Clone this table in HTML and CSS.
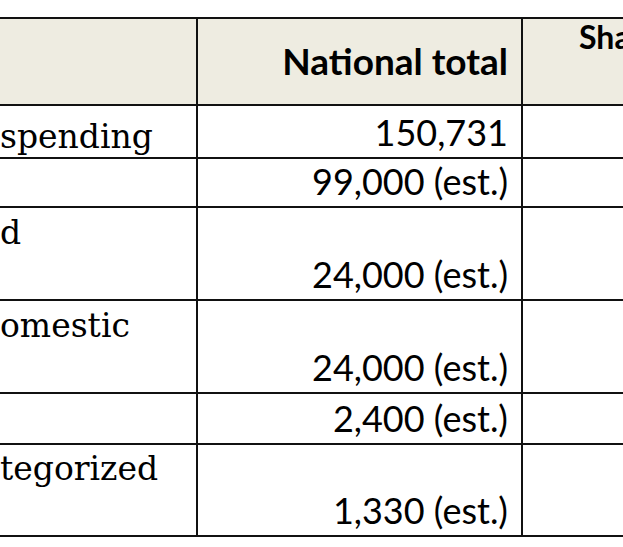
FILE: index.html
```html
<!DOCTYPE html>
<html>
<head>
<meta charset="utf-8">
<link rel="stylesheet" href="styles.css">
</head>
<body>
<div class="wrap">
<table class="data">
  <colgroup>
    <col class="c-label">
    <col class="c-total">
    <col class="c-share">
  </colgroup>
  <thead>
    <tr class="r-head">
      <th class="label"></th>
      <th class="total-h">National total</th>
      <th class="share-h">Share</th>
    </tr>
  </thead>
  <tbody>
    <tr class="r1">
      <td class="label"><div class="ltxt">spending</div></td>
      <td class="num">150,731</td>
      <td></td>
    </tr>
    <tr class="r2">
      <td class="label"></td>
      <td class="num">99,000 (est.)</td>
      <td></td>
    </tr>
    <tr class="r3">
      <td class="label"><div class="ltxt">d<br>&nbsp;</div></td>
      <td class="num">24,000 (est.)</td>
      <td></td>
    </tr>
    <tr class="r4">
      <td class="label"><div class="ltxt">omestic<br>&nbsp;</div></td>
      <td class="num">24,000 (est.)</td>
      <td></td>
    </tr>
    <tr class="r5">
      <td class="label"></td>
      <td class="num">2,400 (est.)</td>
      <td></td>
    </tr>
    <tr class="r6">
      <td class="label"><div class="ltxt">tegorized<br>&nbsp;</div></td>
      <td class="num">1,330 (est.)</td>
      <td></td>
    </tr>
  </tbody>
</table>
</div>
</body>
</html>
```

FILE: styles.css
```css
html, body {
  margin: 0;
  padding: 0;
  background: #ffffff;
}
body {
  width: 623px;
  height: 547px;
  overflow: hidden;
}
.wrap {
  padding-top: 17px;
}
.data {
  border-collapse: collapse;
  table-layout: fixed;
  width: 800px;
  color: #000;
}
.c-label { width: 197px; }
.c-total { width: 325px; }
.c-share { width: 278px; }

.data th, .data td {
  border: 2px solid #111;
  padding: 0;
  box-sizing: border-box;
}
.data .label {
  border-left: none;
}
.r-head th {
  background: #eeece1;
  height: 87px;
  font-family: Lato, "Open Sans", sans-serif;
  font-weight: 700;
}
.total-h {
  font-size: 37px;
  line-height: 1.2;
  text-align: right;
  vertical-align: middle;
  padding-right: 13px !important;
}
.share-h {
  font-size: 32px;
  line-height: 1;
  text-align: left;
  vertical-align: top;
  padding-left: 56px !important;
  padding-top: 2px !important;
  white-space: nowrap;
  overflow: hidden;
}
.r1 td { height: 53px; }
.r2 td { height: 49px; }
.r3 td { height: 93px; }
.r4 td { height: 93px; }
.r5 td { height: 51px; }
.r6 td { height: 92px; }

.num {
  font-family: Lato, "Open Sans", sans-serif;
  font-size: 36px;
  line-height: 1.2;
  text-align: right;
  vertical-align: bottom;
  padding-right: 13px !important;
  padding-bottom: 3px !important;
  white-space: nowrap;
}
.label {
  font-family: "DejaVu Serif", serif;
  font-size: 33px;
  vertical-align: bottom;
  text-align: left;
  white-space: nowrap;
  overflow: hidden;
}
.ltxt {
  line-height: 46px;
  margin-bottom: -3px;
}
```
